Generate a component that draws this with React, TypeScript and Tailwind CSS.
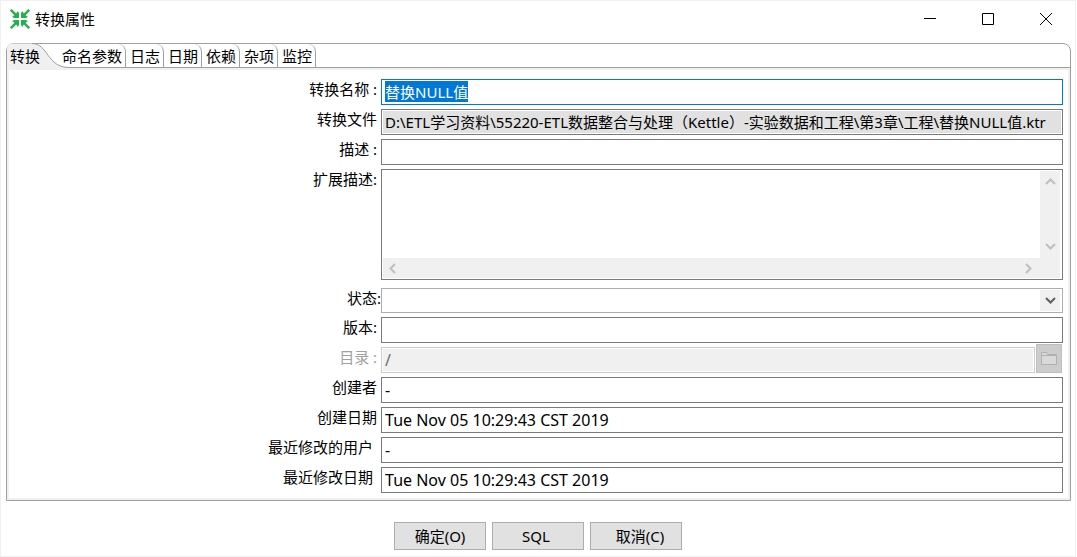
import React, { useEffect, useRef } from 'react';

interface FieldRowProps {
  id: string;
  label: string;
  labelClass?: string;
  children: React.ReactNode;
}

const TABS = ['命名参数', '日志', '日期', '依赖', '杂项', '监控'];

const INPUT = 'block h-[26px] w-full min-w-0 border border-[#7a7a7a] bg-white px-[3px] text-base outline-none';

const FieldRow: React.FC<FieldRowProps> = ({ id, label, labelClass = 'pr-1', children }) => (
  <div className="flex items-start">
    <label htmlFor={id} className={`w-[35.3%] shrink-0 text-right leading-5 whitespace-pre ${labelClass}`}>
      {label}
    </label>
    <div className="min-w-0 flex-1">{children}</div>
  </div>
);

const CHEVRONS = {
  up: 'M1 8l4.5-4.5L10 8',
  down: 'M1 3L5.5 7.5 10 3',
  left: 'M7 1L2.5 5.5 7 10',
  right: 'M3 1l4.5 4.5L3 10',
};

const Chevron: React.FC<{ dir: keyof typeof CHEVRONS; color?: string }> = ({ dir, color = '#bfbfbf' }) => (
  <svg width="11" height="11" viewBox="0 0 11 11" fill="none" stroke={color} strokeWidth="2">
    <path d={CHEVRONS[dir]} />
  </svg>
);

const ScrollButton: React.FC<{ dir: keyof typeof CHEVRONS; label: string }> = ({ dir, label }) => (
  <button type="button" disabled aria-label={label} className="flex size-5 items-center justify-center">
    <Chevron dir={dir} />
  </button>
);

const AppIcon = () => (
  <svg width="20" height="20" viewBox="0 0 20 20" fill="#22b14c" stroke="#22b14c" strokeWidth="2.4">
    <g id="arrow">
      <path d="M.8 .8l6 6" />
      <path d="M7.4 1.8L9 9 1.8 7.6l3-1.4 1.4-1.4z" stroke="none" />
      <path d="M9 3v6H3l1.6-2.4 2-2z" stroke="none" />
    </g>
    <use href="#arrow" transform="rotate(90 10 10)" />
    <use href="#arrow" transform="rotate(180 10 10)" />
    <use href="#arrow" transform="rotate(270 10 10)" />
  </svg>
);

const TitleBar = () => (
  <header className="flex h-[42px] items-start justify-between">
    <div className="flex h-9 items-center gap-[5px] pl-[9px]">
      <AppIcon />
      <h1>转换属性</h1>
    </div>
    <div className="flex h-9">
      <button type="button" aria-label="最小化" className="flex w-[58px] items-center justify-center">
        <svg width="12" height="12" stroke="#000"><path d="M0 5.5h12" /></svg>
      </button>
      <button type="button" aria-label="最大化" className="flex w-[58px] items-center justify-center">
        <svg width="12" height="12" fill="none" stroke="#000"><path d="M.5.5h11v11H.5z" /></svg>
      </button>
      <button type="button" aria-label="关闭" className="flex w-[58px] items-center justify-center">
        <svg width="12" height="12" stroke="#000"><path d="M0 0l12 12M12 0L0 12" /></svg>
      </button>
    </div>
  </header>
);

const TabBar = () => (
  <div role="tablist" className="flex h-6">
    <button type="button" role="tab" aria-selected="true" className="relative w-[51px] shrink-0 pl-[3px] text-left">
      <svg className="pointer-events-none absolute -top-px left-0" width="63" height="25">
        <path d="M0 25V6Q0 1 6 .5H25C41 .5 40 24.5 62 24.5V25z" fill="#f0f0f0" />
        <path d="M25 .5C41 .5 40 24.5 62 24.5" fill="none" stroke="#a0a0a0" />
      </svg>
      <span className="relative">转换</span>
    </button>
    {TABS.map((tab) => (
      <button
        key={tab}
        type="button"
        role="tab"
        aria-selected="false"
        className="shrink-0 rounded-tr-lg border-r border-[#a0a0a0] pr-[3px] pl-1 shadow-[inset_0_-1px_0_#a0a0a0] first-of-type:shadow-none"
      >
        {tab}
      </button>
    ))}
    <div className="flex-1 border-b border-[#a0a0a0]" />
  </div>
);

const App: React.FC = () => {
  const nameRef = useRef<HTMLInputElement>(null);

  useEffect(() => {
    nameRef.current?.focus();
    nameRef.current?.select();
  }, []);

  return (
    <div className="mr-px border border-[#f0f0f0] bg-white font-['Noto_Sans','Noto_Sans_CJK_SC',sans-serif] text-[15px] leading-5 text-black">
      <TitleBar />

      <main className="mr-1 ml-[5px] rounded-t-lg border border-[#a0a0a0]">
        <TabBar />
        <form className="flex flex-col gap-1 border-2 border-[#f0f0f0] pt-[9px] pr-[5px] pb-[5px]">
          <FieldRow id="name" label="转换名称 :">
            <input
              id="name"
              ref={nameRef}
              defaultValue="替换NULL值"
              className="block h-[26px] w-full border border-[#0078d7] px-[3px] pb-0.5 outline-none selection:bg-[#0078d7] selection:text-white"
            />
          </FieldRow>
          <FieldRow id="file" label="转换文件">
            <div className="h-[26px] border border-[#7a7a7a] p-px">
              <input
                id="file"
                readOnly
                value="D:\ETL学习资料\55220-ETL数据整合与处理（Kettle）-实验数据和工程\第3章\工程\替换NULL值.ktr"
                className="block h-full w-full bg-[#e1e1e1] px-0.5 pb-0.5 outline-none"
              />
            </div>
          </FieldRow>
          <FieldRow id="desc" label="描述 :">
            <input id="desc" className={INPUT} />
          </FieldRow>
          <FieldRow id="extended" label="扩展描述:">
            <div className="mb-1 border border-[#7a7a7a] p-px pr-0.5">
              <div className="flex">
                <textarea id="extended" className="block h-[87px] min-w-0 flex-1 resize-none px-0.5 outline-none" />
                <div className="flex w-5 flex-col justify-between bg-[#f0f0f0] pb-0.5">
                  <ScrollButton dir="up" label="向上滚动" />
                  <ScrollButton dir="down" label="向下滚动" />
                </div>
              </div>
              <div className="flex h-5 justify-between bg-[#f0f0f0] pr-[22px]">
                <ScrollButton dir="left" label="向左滚动" />
                <ScrollButton dir="right" label="向右滚动" />
              </div>
            </div>
          </FieldRow>
          <FieldRow id="status" label="状态:" labelClass="pr-0">
            <div className="relative">
              <select id="status" className="block h-[25px] w-full appearance-none border border-[#adadad] bg-white px-[3px] outline-none">
                <option value="" />
              </select>
              <span className="pointer-events-none absolute inset-y-0.5 right-[3px] flex w-5 items-center justify-center bg-[#f0f0f0]">
                <Chevron dir="down" color="#606060" />
              </span>
            </div>
          </FieldRow>
          <FieldRow id="version" label="版本:">
            <input id="version" className={INPUT} />
          </FieldRow>
          <FieldRow id="directory" label="目录 :" labelClass="pr-1 text-[#a0a0a0]">
            <div className="flex h-[26px] items-end gap-px pr-px">
              <div className="h-[26px] min-w-0 flex-1 border border-[#ccc] p-px">
                <input id="directory" disabled value="/" className="block h-full w-full bg-[#f0f0f0] px-0.5 text-base text-[#6d6d6d]" />
              </div>
              <button type="button" disabled aria-label="选择目录" className="flex h-[29px] w-[26px] shrink-0 items-center justify-center border border-[#bfbfbf] bg-[#ccc]">
                <svg width="16" height="13" fill="#d9d9d9" stroke="#b0b0b0">
                  <path d="M.5 12.5V.5h5l1 2h9v10zM.5 3.5h15" />
                </svg>
              </button>
            </div>
          </FieldRow>
          <FieldRow id="creator" label="创建者">
            <input id="creator" readOnly value="-" className={INPUT} />
          </FieldRow>
          <FieldRow id="created" label="创建日期">
            <input id="created" readOnly value="Tue Nov 05 10:29:43 CST 2019" className={INPUT} />
          </FieldRow>
          <FieldRow id="modifier" label="最近修改的用户" labelClass="pr-2">
            <input id="modifier" readOnly value="-" className={INPUT} />
          </FieldRow>
          <FieldRow id="modified" label="最近修改日期" labelClass="pr-2">
            <input id="modified" readOnly value="Tue Nov 05 10:29:43 CST 2019" className={INPUT} />
          </FieldRow>
        </form>
      </main>

      <footer className="flex justify-center gap-1.5 pt-[21px] pb-1.5">
        <button type="button" className="h-7 w-[92px] border border-[#adadad] bg-[#e1e1e1]">确定(O)</button>
        <button type="button" className="h-7 w-[92px] border border-[#adadad] bg-[#e1e1e1] pr-1">SQL</button>
        <button type="button" className="h-7 w-[92px] border border-[#adadad] bg-[#e1e1e1] pl-2">取消(C)</button>
      </footer>
    </div>
  );
};

export default App;
